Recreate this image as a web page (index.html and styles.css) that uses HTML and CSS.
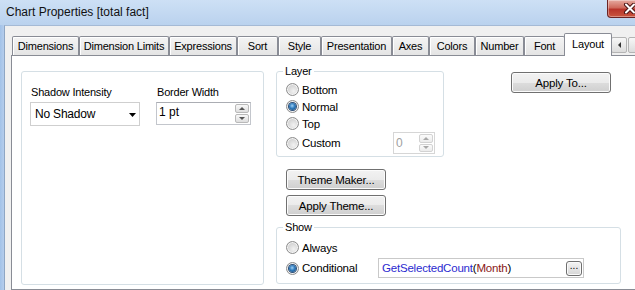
FILE: index.html
```html
<!DOCTYPE html>
<html lang="en">
<head>
  <meta charset="UTF-8" />
  <title>Chart Properties [total fact]</title>
  <link rel="stylesheet" href="styles.css">
</head>
<body>
  <div class="window">
    <div class="titlebar">
      <span class="title">Chart Properties [total fact]</span>
      <span class="close-btn">
        <svg width="14" height="11" viewBox="0 0 14 11">
          <path d="M3 1.5 L11 9.5 M11 1.5 L3 9.5" stroke="#4a1414" stroke-width="4" stroke-linecap="round"/>
          <path d="M3 1.5 L11 9.5 M11 1.5 L3 9.5" stroke="#fff" stroke-width="2" stroke-linecap="round"/>
        </svg>
      </span>
    </div>

    <div class="client">
      <!-- tab strip -->
      <div class="tabs">
        <span class="tab tab-dimensions">Dimensions</span>
        <span class="tab tab-limits">Dimension Limits</span>
        <span class="tab tab-expressions">Expressions</span>
        <span class="tab tab-sort">Sort</span>
        <span class="tab tab-style">Style</span>
        <span class="tab tab-presentation">Presentation</span>
        <span class="tab tab-axes">Axes</span>
        <span class="tab tab-colors">Colors</span>
        <span class="tab tab-number">Number</span>
        <span class="tab tab-font">Font</span>
        <span class="tab tab-layout active">Layout</span>
        <span class="tab-scroll"><i class="arrow-left"></i></span>
        <span class="tab-scroll"><i class="arrow-right"></i></span>
      </div>

      <div class="panel">
        <div class="box shadow-box">
          <div class="field field-shadow">
            <span class="field-label">Shadow Intensity</span>
            <div class="combo">
              <span>No Shadow</span>
              <svg width="7" height="4" viewBox="0 0 7 4"><path d="M0 0 H7 L3.5 4 Z" fill="#000"/></svg>
            </div>
          </div>
          <div class="field field-border">
            <span class="field-label">Border Width</span>
            <div class="spin-field">
              <span class="spin-value">1 pt</span>
              <span class="spinner">
                <span class="spin-btn up"></span>
                <span class="spin-btn down"></span>
              </span>
            </div>
          </div>
        </div>

        <div class="right-col">
          <div class="top-row">
            <fieldset class="group layer-group">
              <legend>Layer</legend>
              <label class="radio-row"><span class="radio"></span>Bottom</label>
              <label class="radio-row"><span class="radio checked"></span>Normal</label>
              <label class="radio-row"><span class="radio"></span>Top</label>
              <label class="radio-row custom-row">
                <span class="radio"></span>Custom
                <span class="spin-field spin-small disabled">
                  <span class="spin-value">0</span>
                  <span class="spinner">
                    <span class="spin-btn up"></span>
                    <span class="spin-btn down"></span>
                  </span>
                </span>
              </label>
            </fieldset>
            <button class="btn apply-to">Apply To...</button>
          </div>

          <button class="btn theme-btn">Theme Maker...</button>
          <button class="btn theme-btn apply-theme">Apply Theme...</button>

          <fieldset class="group show-group">
            <legend>Show</legend>
            <label class="radio-row"><span class="radio"></span>Always</label>
            <div class="radio-row cond-row">
              <label class="cond-label"><span class="radio checked"></span>Conditional</label>
              <div class="expr">
                <span class="expr-text"><span class="fn">GetSelectedCount</span>(<span class="fld">Month</span>)</span>
                <button class="dots">...</button>
              </div>
            </div>
          </fieldset>
        </div>
      </div>
    </div>
  </div>
</body>
</html>
```

FILE: styles.css
```css
:root {
  --tab-border:   #898c95;
  --group-border: #d5dfe5;
  --field-border: #c3c6cc;
  --btn-border:   #707070;
}

* { box-sizing: border-box; }

html, body {
  margin: 0;
  width: 635px;
  height: 290px;
  overflow: hidden;
}

body {
  font-family: "Liberation Sans", Arial, sans-serif;
  font-size: 11px;
  color: #000;
  background: #b7cfec;
}

.window {
  width: 656px;
  height: 290px;
  display: flex;
  flex-direction: column;
  background: linear-gradient(90deg, #a2c2e8, #b5cdec 4px);
}

/* title bar */
.titlebar {
  height: 25px;
  flex: none;
  display: flex;
  align-items: flex-start;
  padding-left: 6px;
  background: linear-gradient(#cde0f5, #bad2ee);
}
.title {
  font-size: 12px;
  line-height: 25px;
  color: #111;
}
.close-btn {
  margin-left: auto;
  margin-right: 3px;
  width: 46px;
  height: 18px;
  display: flex;
  align-items: center;
  justify-content: center;
  border: 1px solid #6b2424;
  border-top: none;
  border-radius: 0 0 4px 4px;
  background: linear-gradient(#e6aaa0, #cf6a5c 45%, #b8342a 55%, #c9563f);
  box-shadow: inset 0 0 0 1px rgba(255,255,255,0.35);
}

/* client area */
.client {
  flex: 1;
  display: flex;
  flex-direction: column;
  margin-left: 4px;
  border-left: 1px solid #8ea6c4;
  border-top: 1px solid #a5bad5;
  padding-left: 6px;
  background: #f0f0f0;
}

.tabs {
  height: 29px;
  flex: none;
  display: flex;
  align-items: flex-end;
  padding-left: 1px;
}
.tab {
  height: 19px;
  flex: none;
  border: 1px solid var(--tab-border);
  border-bottom: none;
  border-radius: 2px 2px 0 0;
  background: linear-gradient(#f4f4f4, #e4e4e4);
  box-shadow: inset 1px 1px #fff;
  text-align: center;
  line-height: 18px;
  letter-spacing: -0.2px;
  white-space: nowrap;
}
.tab.active {
  position: relative;
  z-index: 1;
  height: 23px;
  margin: 0 -1px -1px -1px;
  background: #fff;
  box-shadow: none;
  line-height: 20px;
}
.tab-dimensions   { width: 67px; }
.tab-limits       { width: 90px; }
.tab-expressions  { width: 68px; }
.tab-sort         { width: 41px; }
.tab-style        { width: 43px; }
.tab-presentation { width: 71px; }
.tab-axes         { width: 37px; }
.tab-colors       { width: 46px; }
.tab-number       { width: 49px; }
.tab-font         { width: 41px; }
.tab-layout       { width: 48px; }

.tab-scroll {
  width: 16px;
  height: 16px;
  flex: none;
  margin: 0 1px 2px 0;
  border: 1px solid #b4b4b4;
  border-radius: 2px;
  background: linear-gradient(#f7f7f7, #dcdcdc);
  display: flex;
  align-items: center;
  justify-content: center;
}
.tab-scroll:first-of-type { margin-left: 4px; }
.arrow-left, .arrow-right {
  width: 0;
  height: 0;
  border-top: 3px solid transparent;
  border-bottom: 3px solid transparent;
}
.arrow-left  { border-right: 3px solid #333; }
.arrow-right { border-left: 3px solid #333; }

/* page panel */
.panel {
  flex: 1;
  display: flex;
  align-items: flex-start;
  gap: 12px;
  margin-right: 4px;
  padding-left: 9px;
  background: #fff;
  border: 1px solid var(--tab-border);
}

.box, .group {
  border: 1px solid var(--group-border);
  border-radius: 3px;
}

.shadow-box {
  width: 243px;
  height: 214px;
  margin-top: 15px;
  padding: 13px 0 0 8px;
  display: flex;
  gap: 16px;
}
.field { display: flex; flex-direction: column; }
.field-label {
  line-height: 14px;
  padding-left: 1px;
  margin-bottom: 3px;
  letter-spacing: -0.2px;
}
.field-shadow { width: 110px; }
.field-border { width: 95px; }

.combo {
  height: 24px;
  display: flex;
  align-items: center;
  justify-content: space-between;
  padding: 0 3px 0 4px;
  border: 1px solid #cfcfcf;
  background: #fff;
  font-size: 12px;
  letter-spacing: -0.2px;
}
.combo svg { margin-top: 1px; }

.spin-field {
  height: 23px;
  display: flex;
  border: 1px solid var(--field-border);
  border-top-color: #abadb3;
  background: #fff;
}
.spin-value {
  flex: 1;
  padding: 2px 0 0 2px;
  line-height: 14px;
  font-size: 12px;
}
.spinner {
  width: 14px;
  display: flex;
  flex-direction: column;
  gap: 1px;
  margin: 1px 1px 1px 0;
}
.spin-btn {
  flex: 1;
  display: flex;
  align-items: center;
  justify-content: center;
  border: 1px solid #b9b9b9;
  border-radius: 2px;
  background: linear-gradient(#f8f8f8, #dedede);
}
.spin-btn::after {
  content: "";
  border-left: 3px solid transparent;
  border-right: 3px solid transparent;
}
.spin-btn.up::after   { border-bottom: 3px solid #555; }
.spin-btn.down::after { border-top: 3px solid #555; }

.spin-small {
  width: 42px;
  height: 22px;
  margin-left: auto;
}
.disabled { border-color: #d6d6d6; }
.disabled .spin-value { color: #a0a0a0; padding-top: 3px; }
.disabled .spin-btn { border-color: #d2d2d2; background: linear-gradient(#fbfbfb, #ececec); }
.disabled .spin-btn.up::after   { border-bottom-color: #a8a8a8; }
.disabled .spin-btn.down::after { border-top-color: #a8a8a8; }

/* right column */
.right-col {
  margin-top: 8px;
  display: flex;
  flex-direction: column;
  align-items: flex-start;
}
.top-row { display: flex; align-items: flex-start; }

fieldset {
  margin: 0;
  min-width: 0;
}
legend {
  padding: 0 2px;
  margin-left: -3px;
  line-height: 14px;
  letter-spacing: -0.2px;
}

.layer-group {
  width: 168px;
  height: 93px;
  padding: 3px 8px 1px 9px;
}
.show-group {
  width: 345px;
  height: 64px;
  margin-top: 4px;
  padding: 5px 0 5px 9px;
}

.radio-row {
  height: 17px;
  display: flex;
  align-items: center;
  gap: 3px;
  letter-spacing: -0.2px;
  font-size: 11.5px;
}
.custom-row { height: 22px; }
.cond-row { height: 20px; margin-top: 2px; gap: 0; }
.cond-label {
  width: 92px;
  display: flex;
  align-items: center;
  gap: 3px;
}

.radio {
  width: 13px;
  height: 13px;
  flex: none;
  display: flex;
  align-items: center;
  justify-content: center;
  border: 1px solid #8d8d8d;
  border-radius: 50%;
  background: radial-gradient(circle at 60% 65%, #f2f2f2 0, #dcdcdc 45%, #c2c2c2 100%);
  box-shadow: inset 0 0 0 1px #f4f4f4;
}
.radio.checked::after {
  content: "";
  width: 7px;
  height: 7px;
  border-radius: 50%;
  background: radial-gradient(circle at 45% 40%, #9fd0f4 0, #2f7bbd 45%, #0f3f6f 100%);
  box-shadow: 0 0 0 1px #2d4f78;
}

.btn {
  height: 21px;
  padding: 0;
  font-family: inherit;
  font-size: 11.5px;
  letter-spacing: -0.2px;
  color: #000;
  border: 1px solid var(--btn-border);
  border-radius: 3px;
  background: linear-gradient(#f2f2f2 0%, #ebebeb 50%, #dddddd 50%, #cfcfcf 100%);
  box-shadow: inset 0 0 0 1px #fbfbfb;
  cursor: pointer;
}
.apply-to {
  width: 100px;
  margin: 8px 0 0 67px;
}
.theme-btn {
  width: 100px;
  margin: 12px 0 0 10px;
}
.apply-theme { margin-top: 5px; }

.expr {
  width: 206px;
  height: 20px;
  display: flex;
  align-items: center;
  padding: 0 1px 0 3px;
  border: 1px solid #c9c9c9;
  background: #fff;
}
.expr-text {
  flex: 1;
  font-size: 11.5px;
  white-space: nowrap;
}
.fn  { color: #2b2bd0; }
.fld { color: #8a1818; }

.dots {
  width: 16px;
  height: 15px;
  padding: 0 0 4px;
  font-family: inherit;
  font-size: 10px;
  line-height: 8px;
  border: 1px solid #6f6f6f;
  border-radius: 3px;
  background: linear-gradient(#f4f4f4, #d6d6d6);
  box-shadow: inset 0 0 0 1px #fafafa;
}
```
